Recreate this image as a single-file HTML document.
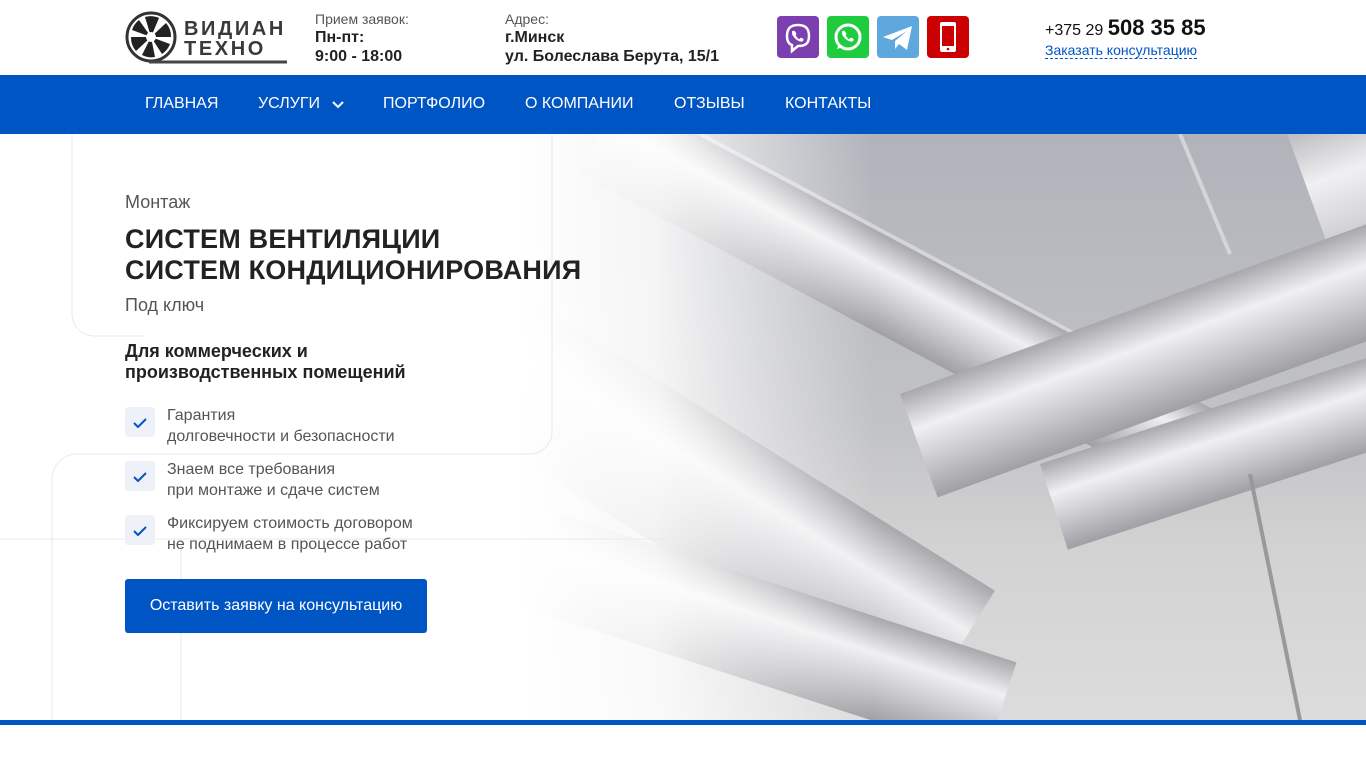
<!DOCTYPE html>
<html><head><meta charset="utf-8"><style>
*{margin:0;padding:0;box-sizing:border-box}
body{width:1366px;height:768px;overflow:hidden;background:#fff;font-family:"Liberation Sans",Arial,sans-serif;position:relative}
.hdr{position:absolute;top:0;left:0;width:1366px;height:75px;background:#fff}
.abs{position:absolute}
.small{font-size:14px;color:#555}
.bold{font-size:16px;font-weight:bold;color:#222;line-height:19px}
.nav{position:absolute;top:75px;left:0;width:1366px;height:59px;background:#0055c4}
.nav span{position:absolute;top:20px;color:#fff;font-size:16px}
.hero{position:absolute;top:134px;left:0;width:1366px;height:586px;overflow:hidden;background:#fff}
.bar{position:absolute;top:720px;left:0;width:1366px;height:5px;background:#0055c4}
.chk{position:absolute;left:125px;width:30px;height:30px;background:#eef2f8;border-radius:3px}
.li{position:absolute;left:167px;font-size:16px;color:#555;line-height:21px}
</style></head><body>
<div class="hdr">
 <svg class="abs" style="left:125px;top:11px" width="164" height="54" viewBox="0 0 164 54">
  <circle cx="26" cy="26" r="24" fill="none" stroke="#333" stroke-width="3"/>
  <g fill="#222">
   <path d="M26 26 L20 6 A20 20 0 0 1 34 7 Z"/>
   <path d="M26 26 L41 12 A20 20 0 0 1 46 26 Z"/>
   <path d="M26 26 L45 33 A20 20 0 0 1 37 43 Z"/>
   <path d="M26 26 L30 46 A20 20 0 0 1 17 44 Z"/>
   <path d="M26 26 L11 40 A20 20 0 0 1 6 26 Z"/>
   <path d="M26 26 L7 19 A20 20 0 0 1 14 9 Z"/>
  </g>
  <circle cx="26" cy="26" r="5" fill="#fff"/>
  <line x1="24" y1="51" x2="162" y2="51" stroke="#444" stroke-width="3"/>
  <text x="59" y="24" font-family="Liberation Sans" font-weight="bold" font-size="20" letter-spacing="2.6" fill="#3a3a3a">ВИДИАН</text>
  <text x="59" y="44" font-family="Liberation Sans" font-weight="bold" font-size="20" letter-spacing="2.6" fill="#3a3a3a">ТЕХНО</text>
 </svg>
 <div class="abs small" style="left:315px;top:11px">Прием заявок:</div>
 <div class="abs bold" style="left:315px;top:28px">Пн-пт:<br>9:00 - 18:00</div>
 <div class="abs small" style="left:505px;top:11px">Адрес:</div>
 <div class="abs bold" style="left:505px;top:28px">г.Минск<br>ул. Болеслава Берута, 15/1</div>
 <svg class="abs" style="left:777px;top:16px" width="42" height="42" viewBox="0 0 42 42"><rect width="42" height="42" rx="4" fill="#7b3fb0"/><path d="M10 20c0-8 4-11 11-11s11 3 11 11-4 10-11 10l-6 5v-6c-3-1-5-4-5-9z" fill="none" stroke="#fff" stroke-width="2.5"/><path d="M16 15c1-1 2 0 3 2s-1 2 0 3 2 3 3 3 1-2 3-1 2 2 1 3-3 1-6-1-5-5-5-7 0-2 1-2z" fill="#fff"/></svg>
 <svg class="abs" style="left:827px;top:16px" width="42" height="42" viewBox="0 0 42 42"><rect width="42" height="42" rx="4" fill="#1fcb3f"/><circle cx="21" cy="21" r="12" fill="none" stroke="#fff" stroke-width="3"/><path d="M10 33l2-6 4 4z" fill="#fff"/><path d="M16 15c1-1 2 0 3 2s-1 2 0 3 2 3 3 3 1-2 3-1 2 2 1 3-3 1-6-1-5-5-5-7 0-2 1-2z" fill="#fff"/></svg>
 <svg class="abs" style="left:877px;top:16px" width="42" height="42" viewBox="0 0 42 42"><rect width="42" height="42" rx="4" fill="#5fa8dd"/><path d="M6 21l29-11-5 24-8-6-4 5v-8l12-10-15 9z" fill="#fff"/></svg>
 <svg class="abs" style="left:927px;top:16px" width="42" height="42" viewBox="0 0 42 42"><rect width="42" height="42" rx="4" fill="#cc0000"/><rect x="13" y="6" width="16" height="30" rx="2" fill="#fff"/><rect x="15" y="10" width="12" height="20" fill="#cc0000"/><circle cx="21" cy="33" r="1.3" fill="#cc0000"/></svg>
 <div class="abs" style="left:1045px;top:15px;font-size:16px;color:#111">+375 29 <b style="font-size:22px">508 35 85</b></div>
 <div class="abs" style="left:1045px;top:43px;font-size:14px;color:#0055c4;border-bottom:1px dashed #0055c4;line-height:15px">Заказать консультацию</div>
</div>
<div class="nav">
 <span style="left:145px">ГЛАВНАЯ</span>
 <span style="left:258px">УСЛУГИ</span>
 <svg class="abs" style="left:332px;top:26px" width="12" height="8"><path d="M1 1l5 5 5-5" fill="none" stroke="#fff" stroke-width="2"/></svg>
 <span style="left:383px">ПОРТФОЛИО</span>
 <span style="left:525px">О КОМПАНИИ</span>
 <span style="left:674px">ОТЗЫВЫ</span>
 <span style="left:785px">КОНТАКТЫ</span>
</div>
<div class="hero">
 <svg class="abs" style="left:0;top:0" width="1366" height="586" viewBox="0 0 1366 586">
  <defs>
   <linearGradient id="fade" x1="0" x2="1"><stop offset="0.38" stop-color="#fff"/><stop offset="0.48" stop-color="#fff" stop-opacity="0.85"/><stop offset="0.64" stop-color="#fff" stop-opacity="0"/></linearGradient>
   <linearGradient id="pipe" x1="0" y1="0" x2="0" y2="1"><stop offset="0" stop-color="#a8a8ac"/><stop offset="0.35" stop-color="#f0f0f2"/><stop offset="0.6" stop-color="#d2d2d6"/><stop offset="1" stop-color="#a0a0a4"/></linearGradient>
   <linearGradient id="bg" x1="0" y1="0" x2="0" y2="1"><stop offset="0" stop-color="#b0b3ba"/><stop offset="0.5" stop-color="#c2c3c6"/><stop offset="0.7" stop-color="#d2d2d2"/><stop offset="1" stop-color="#dcdcdc"/></linearGradient>
  </defs>
  <rect width="1366" height="586" fill="url(#bg)"/>
  <g stroke="#dcdde0" stroke-width="4" opacity="0.8">
   <line x1="600" y1="0" x2="1050" y2="250"/><line x1="700" y1="0" x2="1150" y2="240"/><line x1="1180" y1="0" x2="1230" y2="120"/>
  </g>
  <rect x="620" y="-40" width="700" height="90" fill="url(#pipe)" transform="rotate(28 620 -40)"/>
  <rect x="1280" y="-20" width="110" height="220" fill="url(#pipe)" transform="rotate(-20 1280 -20)"/>
  <rect x="900" y="260" width="520" height="110" fill="url(#pipe)" transform="rotate(-20 900 260)"/>
  <rect x="1040" y="330" width="360" height="90" fill="url(#pipe)" transform="rotate(-18 1040 330)"/>
  <rect x="520" y="160" width="560" height="140" fill="url(#pipe)" transform="rotate(32 520 160)"/>
  <rect x="560" y="380" width="480" height="100" fill="url(#pipe)" transform="rotate(18 560 380)"/>
  <line x1="1250" y1="340" x2="1300" y2="586" stroke="#999" stroke-width="4"/>
  <rect width="1366" height="586" fill="url(#fade)"/>
  <g fill="none" stroke="#e6eaee" stroke-width="1">
   <path d="M72 0v180a22 22 0 0 0 22 22h50"/>
   <path d="M552 0v298a22 22 0 0 1-22 22h-420"/>
   <path d="M52 586V345a25 25 0 0 1 25-25h40"/>
   <line x1="0" y1="405" x2="700" y2="405"/>
   <line x1="181" y1="405" x2="181" y2="586"/>
  </g>
 </svg>
 <div class="abs" style="left:125px;top:58px;font-size:18px;color:#555">Монтаж</div>
 <div class="abs" style="left:125px;top:90px;font-size:27px;font-weight:bold;color:#222;line-height:31px;letter-spacing:0.2px">СИСТЕМ ВЕНТИЛЯЦИИ<br>СИСТЕМ КОНДИЦИОНИРОВАНИЯ</div>
 <div class="abs" style="left:125px;top:161px;font-size:18px;color:#555">Под ключ</div>
 <div class="abs" style="left:125px;top:207px;font-size:18px;font-weight:bold;color:#222;line-height:21px">Для коммерческих и<br>производственных помещений</div>
 <div class="chk" style="top:273px"></div><div class="chk" style="top:327px"></div><div class="chk" style="top:381px"></div>
 <svg class="abs" style="left:133px;top:284px" width="14" height="10"><path d="M1 5l4 4 8-8" fill="none" stroke="#0055c4" stroke-width="2"/></svg>
 <svg class="abs" style="left:133px;top:338px" width="14" height="10"><path d="M1 5l4 4 8-8" fill="none" stroke="#0055c4" stroke-width="2"/></svg>
 <svg class="abs" style="left:133px;top:392px" width="14" height="10"><path d="M1 5l4 4 8-8" fill="none" stroke="#0055c4" stroke-width="2"/></svg>
 <div class="li" style="top:271px">Гарантия<br>долговечности и безопасности</div>
 <div class="li" style="top:325px">Знаем все требования<br>при монтаже и сдаче систем</div>
 <div class="li" style="top:379px">Фиксируем стоимость договором<br>не поднимаем в процессе работ</div>
 <div class="abs" style="left:125px;top:445px;width:302px;height:54px;background:#0055c4;border-radius:3px;color:#fff;font-size:16px;line-height:54px;text-align:center">Оставить заявку на консультацию</div>
</div>
<div class="bar"></div>
</body></html>
